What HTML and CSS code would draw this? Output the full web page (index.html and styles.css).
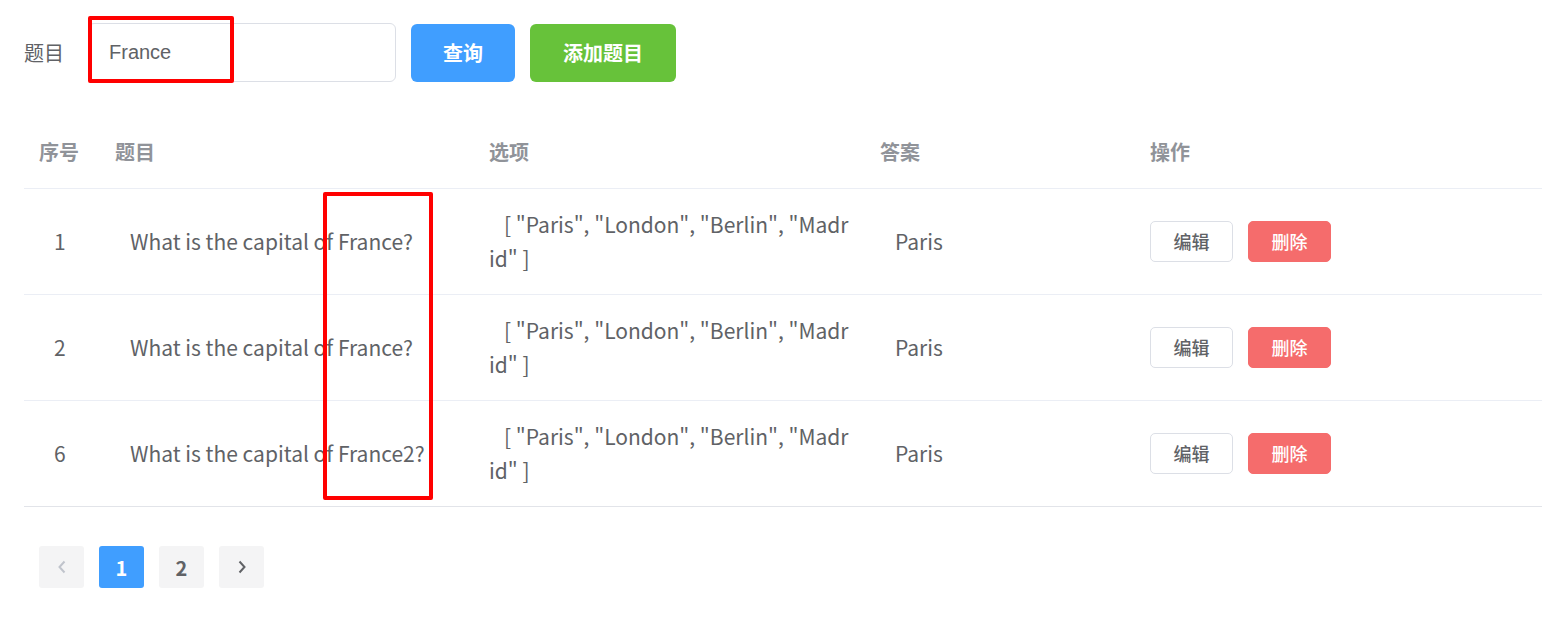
FILE: index.html
```html
<!DOCTYPE html>
<html lang="zh">
<head>
<meta charset="utf-8">
<title>题目管理</title>
<link rel="stylesheet" href="styles.css">
</head>
<body>
<div class="page">
  <form class="search">
    <label class="search-label">题目</label>
    <div class="input-wrap">
      <input class="input" type="text" value="France">
      <span class="mark mark-input"></span>
    </div>
    <button type="button" class="btn btn-primary">查询</button>
    <button type="button" class="btn btn-success">添加题目</button>
  </form>

  <div class="table-wrap">
    <table class="table">
      <colgroup>
        <col class="c1"><col class="c2"><col class="c3"><col class="c4"><col class="c5">
      </colgroup>
      <thead>
        <tr><th>序号</th><th>题目</th><th>选项</th><th>答案</th><th>操作</th></tr>
      </thead>
      <tbody>
        <tr>
          <td class="ind">1</td>
          <td class="ind">What is the capital of France?</td>
          <td class="ind opts">[ "Paris", "London", "Berlin", "Madrid" ]</td>
          <td class="ind">Paris</td>
          <td><div class="ops"><button class="sbtn sbtn-default">编辑</button><button class="sbtn sbtn-danger">删除</button></div></td>
        </tr>
        <tr>
          <td class="ind">2</td>
          <td class="ind">What is the capital of France?</td>
          <td class="ind opts">[ "Paris", "London", "Berlin", "Madrid" ]</td>
          <td class="ind">Paris</td>
          <td><div class="ops"><button class="sbtn sbtn-default">编辑</button><button class="sbtn sbtn-danger">删除</button></div></td>
        </tr>
        <tr>
          <td class="ind">6</td>
          <td class="ind">What is the capital of France2?</td>
          <td class="ind opts">[ "Paris", "London", "Berlin", "Madrid" ]</td>
          <td class="ind">Paris</td>
          <td><div class="ops"><button class="sbtn sbtn-default">编辑</button><button class="sbtn sbtn-danger">删除</button></div></td>
        </tr>
      </tbody>
    </table>
    <span class="mark mark-col"></span>
  </div>

  <div class="pager">
    <button class="pbtn pbtn-disabled" aria-label="上一页">
      <svg width="14" height="16" viewBox="0 0 14 16"><path d="M9.5 2.5 L4.5 8 L9.5 13.5" fill="none" stroke="currentColor" stroke-width="2"/></svg>
    </button>
    <button class="pbtn pbtn-active">1</button>
    <button class="pbtn">2</button>
    <button class="pbtn" aria-label="下一页">
      <svg width="14" height="16" viewBox="0 0 14 16"><path d="M4.5 2.5 L9.5 8 L4.5 13.5" fill="none" stroke="currentColor" stroke-width="2"/></svg>
    </button>
  </div>
</div>
</body>
</html>
```

FILE: styles.css
```css
* { box-sizing: border-box; }
html, body { margin: 0; padding: 0; background: #fff; }
body {
  font-family: "Noto Sans CJK SC", "Open Sans", sans-serif;
  color: #606266;
}
.page { padding: 23px 0 0 24px; }

.search { display: flex; align-items: center; height: 59px; margin: 0; }
.search-label {
  font-size: 20px;
  color: #606266;
  width: 64px;
}
.input-wrap { position: relative; width: 308px; height: 59px; }
.input {
  width: 100%; height: 100%;
  border: 1px solid #dcdfe6; border-radius: 6px;
  padding: 0 20px;
  font-family: "Liberation Sans", Arial, sans-serif;
  font-size: 20px; color: #606266; outline: none;
}
.mark {
  position: absolute;
  border: 4px solid #ff0000;
  border-radius: 2px;
  pointer-events: none;
}
.mark-input { left: 0; top: -7px; width: 146px; height: 67px; }

.btn {
  height: 58px; border: none; border-radius: 6px;
  font-family: "Noto Sans CJK SC", sans-serif;
  font-size: 20px; font-weight: 700; color: #fff;
  margin-left: 15px; padding: 0;
}
.btn-primary { background: #409eff; width: 104px; }
.btn-success { background: #67c23a; width: 146px; }

.table-wrap { position: relative; margin-top: 35px; }
.table { width: 100%; border-collapse: collapse; table-layout: fixed; }
.c1 { width: 76px; } .c2 { width: 374px; } .c3 { width: 391px; } .c4 { width: 270px; }
.table th {
  text-align: left;
  font-weight: 700; font-size: 20px; color: #909399;
  padding: 18px 15px 19px;
  line-height: 34px;
  border-bottom: 1px solid #ebeef5;
}
.table td {
  font-size: 21px; line-height: 34px;
  padding: 18px 15px 19px;
  border-bottom: 1px solid #ebeef5;
  vertical-align: middle;
}
.table tbody tr:last-child td { border-bottom-color: #e2e4e9; }
.ind { text-indent: 15px; }
.opts { word-break: break-all; }
.ops { display: flex; gap: 15px; }
.sbtn {
  width: 83px; height: 41px; border-radius: 5px;
  font-family: "Noto Sans CJK SC", sans-serif;
  font-size: 18px; font-weight: 500; padding: 0;
}
.sbtn-default { background: #fff; border: 1px solid #dcdfe6; color: #606266; }
.sbtn-danger { background: #f56c6c; border: 1px solid #f56c6c; color: #fff; }
.mark-col { left: 299px; top: 75px; width: 110px; height: 308px; }

.pager { display: flex; gap: 15px; margin-top: 39px; padding-left: 15px; }
.pbtn {
  width: 45px; height: 42px; border: none; border-radius: 3px;
  background: #f4f4f5; color: #606266;
  font-family: "Noto Sans CJK SC", sans-serif; font-weight: 700; font-size: 20px;
  display: flex; align-items: center; justify-content: center; padding: 0;
}
.pbtn-disabled { color: #c0c4cc; }
.pbtn-active { background: #409eff; color: #fff; }
```
